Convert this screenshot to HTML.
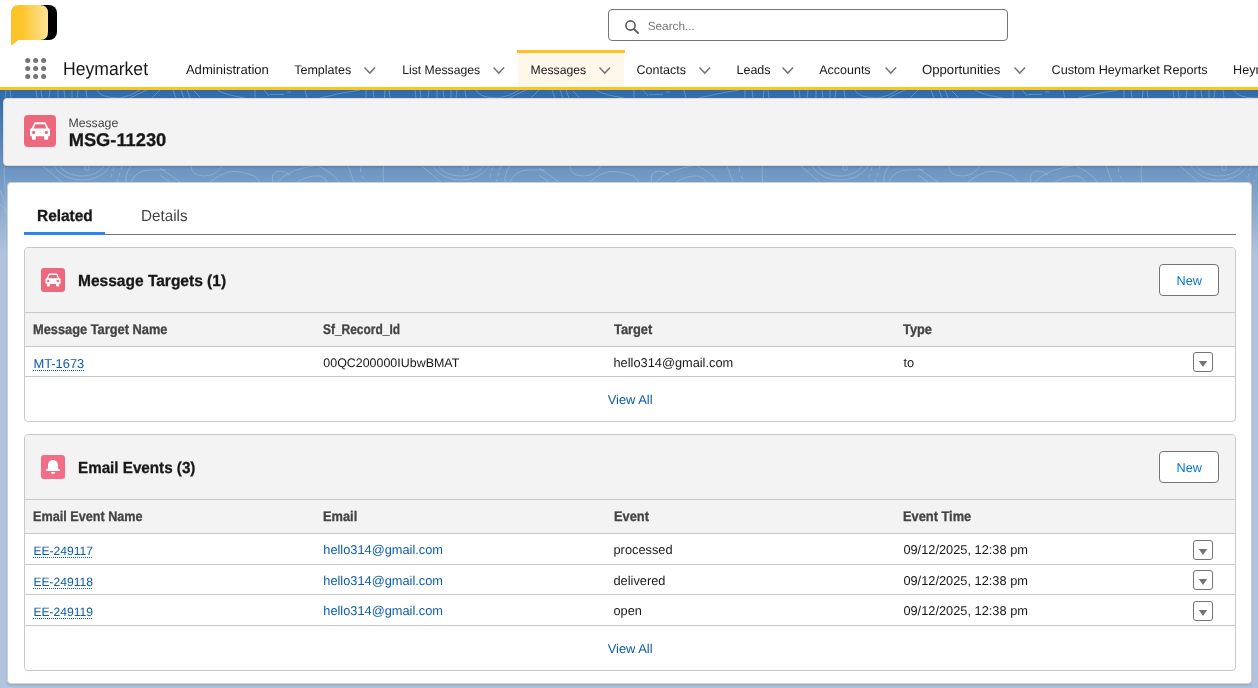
<!DOCTYPE html>
<html><head><meta charset="utf-8"><style>
*{box-sizing:border-box;margin:0;padding:0}
html,body{width:1258px;height:688px;overflow:hidden;background:#b0c4df;font-family:"Liberation Sans",sans-serif;color:#181818;position:relative}
.abs{position:absolute;white-space:nowrap;line-height:20px;text-rendering:geometricPrecision}
.box{position:absolute}
</style></head><body>
<div style="position:absolute;left:0;top:0;width:1258px;height:688px;will-change:transform">
<div class="box" style="left:0;top:0;width:1258px;height:87px;background:#fff"></div>
<svg class="abs" style="left:0;top:0" width="70" height="50" viewBox="0 0 70 50">
<defs><linearGradient id="lg" x1="11" x2="48" y1="0" y2="0" gradientUnits="userSpaceOnUse"><stop offset="0" stop-color="#fdc22a"/><stop offset="0.3" stop-color="#fec52c"/><stop offset="1" stop-color="#fde49a"/></linearGradient></defs>
<rect x="29" y="5" width="28" height="35" rx="8" fill="#000"/>
<path d="M19 5 H40 Q48 5 48 13 V32 Q48 40 40 40 H18.5 L12 45 Q11 45.5 11 44 V13 Q11 5 19 5Z" fill="url(#lg)"/>
</svg>
<div class="box" style="left:608px;top:9px;width:400px;height:32px;border:1px solid #747474;border-radius:4px;background:#fff"></div>
<svg class="abs" style="left:620px;top:16px" width="24" height="24" viewBox="0 0 24 24"><circle cx="10.5" cy="9.5" r="4.6" fill="none" stroke="#5c5c5c" stroke-width="1.6"/><path d="M14 13 L18 17" stroke="#5c5c5c" stroke-width="1.8" stroke-linecap="round"/></svg>
<div class="abs" style="left:647.70px;top:16px;font-size:11.8px;color:#747474">Search...</div>
<svg class="abs" style="left:20px;top:53px" width="32" height="32" viewBox="0 0 32 32" fill="#747474"><circle cx="7.7" cy="7.4" r="2.5"/><circle cx="15.6" cy="7.4" r="2.5"/><circle cx="23.6" cy="7.4" r="2.5"/><circle cx="7.7" cy="15.4" r="2.5"/><circle cx="15.6" cy="15.4" r="2.5"/><circle cx="23.6" cy="15.4" r="2.5"/><circle cx="7.7" cy="23.5" r="2.5"/><circle cx="15.6" cy="23.5" r="2.5"/><circle cx="23.6" cy="23.5" r="2.5"/></svg>
<div class="abs" style="left:62.80px;top:59px;font-size:18.6px;transform:scaleX(0.946);transform-origin:0 0;color:#181818">Heymarket</div>
<div class="box" style="left:518px;top:53px;width:106px;height:34px;background:#fef8ea"></div>
<div class="box" style="left:517px;top:50px;width:108px;height:3px;background:#fec31e"></div>
<div class="abs" style="left:185.90px;top:60px;font-size:13.1px;color:#181818">Administration</div>
<div class="abs" style="left:294.20px;top:60px;font-size:12.5px;color:#181818">Templates</div>
<svg class="abs" style="left:363.40px;top:66.40px" width="13.6" height="8.7" viewBox="-1 -1 13.6 8.7"><path d="M0.5 0.6 L5.80 6.10 L11.10 0.6" fill="none" stroke="#747474" stroke-width="1.45"/></svg>
<div class="abs" style="left:402.20px;top:60px;font-size:12.2px;color:#181818">List Messages</div>
<svg class="abs" style="left:492.30px;top:66.40px" width="13.6" height="8.7" viewBox="-1 -1 13.6 8.7"><path d="M0.5 0.6 L5.80 6.10 L11.10 0.6" fill="none" stroke="#747474" stroke-width="1.45"/></svg>
<div class="abs" style="left:530.60px;top:60px;font-size:12.2px;color:#181818">Messages</div>
<svg class="abs" style="left:598.40px;top:66.40px" width="13.6" height="8.7" viewBox="-1 -1 13.6 8.7"><path d="M0.5 0.6 L5.80 6.10 L11.10 0.6" fill="none" stroke="#747474" stroke-width="1.45"/></svg>
<div class="abs" style="left:636.50px;top:60px;font-size:12.55px;color:#181818">Contacts</div>
<svg class="abs" style="left:698.40px;top:66.40px" width="13.6" height="8.7" viewBox="-1 -1 13.6 8.7"><path d="M0.5 0.6 L5.80 6.10 L11.10 0.6" fill="none" stroke="#747474" stroke-width="1.45"/></svg>
<div class="abs" style="left:736.50px;top:60px;font-size:12.5px;color:#181818">Leads</div>
<svg class="abs" style="left:781.00px;top:66.40px" width="13.6" height="8.7" viewBox="-1 -1 13.6 8.7"><path d="M0.5 0.6 L5.80 6.10 L11.10 0.6" fill="none" stroke="#747474" stroke-width="1.45"/></svg>
<div class="abs" style="left:819.20px;top:60px;font-size:12.5px;color:#181818">Accounts</div>
<svg class="abs" style="left:884.30px;top:66.40px" width="13.6" height="8.7" viewBox="-1 -1 13.6 8.7"><path d="M0.5 0.6 L5.80 6.10 L11.10 0.6" fill="none" stroke="#747474" stroke-width="1.45"/></svg>
<div class="abs" style="left:921.90px;top:60px;font-size:13.2px;color:#181818">Opportunities</div>
<svg class="abs" style="left:1013.30px;top:66.40px" width="13.6" height="8.7" viewBox="-1 -1 13.6 8.7"><path d="M0.5 0.6 L5.80 6.10 L11.10 0.6" fill="none" stroke="#747474" stroke-width="1.45"/></svg>
<div class="abs" style="left:1051.60px;top:60px;font-size:12.65px;color:#181818">Custom Heymarket Reports</div>
<div class="abs" style="left:1233.10px;top:60px;font-size:12.65px;color:#181818">Heymarket Reports</div>
<div class="box" style="left:0;top:87px;width:1258px;height:3px;background:#fec31e"></div>
<div class="box" style="left:0;top:90px;width:1258px;height:165px;background:linear-gradient(to bottom,#2f6aa7 0,rgba(47,106,167,0.55) 45%,rgba(176,196,223,0) 100%)"></div>
<svg class="abs" style="left:0;top:90px" width="1258" height="170" viewBox="0 0 1258 170">
<defs>
<linearGradient id="fade" x1="0" y1="0" x2="0" y2="1"><stop offset="0" stop-color="#fff" stop-opacity="1"/><stop offset="0.6" stop-color="#fff" stop-opacity="0.8"/><stop offset="1" stop-color="#fff" stop-opacity="0"/></linearGradient>
<mask id="fm"><rect width="1258" height="170" fill="url(#fade)"/></mask>
<pattern id="topo" width="379" height="170" patternUnits="userSpaceOnUse" x="0" y="0">
<g fill="none" stroke="#fff" stroke-opacity="0.24" stroke-width="1">
<path d="M6 0 Q2 40 5 70 Q3 84 5 96 Q9 130 2 170"/>
<path d="M38 72 L64 94"/>
<path d="M58 70 A24 16 0 0 0 106 70"/>
<path d="M52 68 A30 22 0 0 0 112 68"/>
<ellipse cx="87" cy="78" rx="2.2" ry="2.5"/>
<path d="M114 77 L110 90 M122 76 L117 92" stroke-dasharray="4 3"/>
<path d="M131 76 Q125 84 126 92"/>
<path d="M131 92 Q136 80 150 80 Q158 80 166 80"/>
<path d="M160 78 L180 92 M160 85 L170 92"/>
<path d="M191 76 Q191 86 205 86 Q215 86 222 76"/>
<path d="M210 92 Q220 84 228 82 Q240 80 254 86 Q258 89 260 92"/>
<path d="M273 92 Q270 82 280 81 Q286 81 290 85"/>
<path d="M277 92 Q290 78 320 75"/>
<path d="M318 76 Q332 82 339 92"/>
<path d="M297 92 Q309 85 320 86 Q326 88 327 92"/>
<path d="M348 76 L354 92"/>
<path d="M360 77 L361 82 M362 86 L364 89"/>
<path d="M10 0 L11 8 M36 0 L37 8 M41 0 L42 8 M50 0 L49 8 M58 0 L58 8 M64 0 L65 8 M72 0 L72 8 M78 0 L77 8 M86 0 L87 8"/>
<path d="M97 0 Q100 8 120 8 Q132 6 140 0"/>
<path d="M130 8 Q138 4 147 0 M152 8 L160 0"/>
<path d="M173 0 L176 8 M181 0 L184 8 M187 0 L190 8"/>
<path d="M194 1 L200 7 M217 0 Q225 5 245 8 M255 0 L255 8 M264 0 L269 6"/>
<path d="M270 4.5 L284 4.5 M287 2 L291 2"/>
<path d="M305 0 L307 8 M320 8 Q340 3 360 0 M366 0 L366 8 M373 0 L374 8"/>
<path d="M0 115 Q10 120 8 135 M0 100 Q6 110 4 125"/>
</g>
</pattern>
</defs>
<rect width="1258" height="170" fill="url(#topo)" mask="url(#fm)"/>
</svg>
<div class="box" style="left:3px;top:98px;width:1270px;height:68px;background:#f3f3f3;border:1px solid #dcdcdc;border-radius:4px;box-shadow:0 2px 2px rgba(0,0,0,.1)"></div>
<svg class="abs" style="left:24px;top:115px" width="32" height="32" viewBox="0 0 32 32"><rect width="32" height="32" rx="4" fill="#eb687f"/>
<path fill="#fff" d="M11.6 7.2 H20.4 Q21.6 7.2 22 8.3 L24.3 13.5 H25 Q26 13.5 26 14.8 V20.2 Q26 21.2 25 21.2 H24.2 V23.8 Q24.2 24.7 23.3 24.7 H21 Q20.2 24.7 20.2 23.8 V21.2 H11.8 V23.8 Q11.8 24.7 11 24.7 H8.8 Q7.9 24.7 7.9 23.8 V21.2 H7 Q6 21.2 6 20.2 V14.8 Q6 13.5 7 13.5 H7.7 L10 8.3 Q10.4 7.2 11.6 7.2Z"/>
<path fill="#eb687f" d="M11.3 9.3 H20.7 L22.4 13.5 H9.6Z"/>
<circle cx="9.6" cy="17.4" r="1.6" fill="#eb687f"/><circle cx="22.4" cy="17.4" r="1.6" fill="#eb687f"/></svg>
<div class="abs" style="left:68.40px;top:113px;font-size:12.3px;color:#444">Message</div>
<div class="abs" style="left:68.70px;top:130px;font-size:18.3px;font-weight:bold;-webkit-text-stroke:0.3px currentColor;color:#181818">MSG-11230</div>
<div class="box" style="left:7px;top:182px;width:1245px;height:502px;background:#fff;border:1px solid #cfcfcf;border-radius:4px;box-shadow:0 2px 2px rgba(0,0,0,.1)"></div>
<div class="abs" style="left:36.70px;top:207px;font-size:16px;font-weight:bold;-webkit-text-stroke:0.3px currentColor;transform:scaleX(0.965);transform-origin:0 0;color:#181818">Related</div>
<div class="abs" style="left:141.20px;top:207px;font-size:16px;transform:scaleX(0.953);transform-origin:0 0;color:#444">Details</div>
<div class="box" style="left:24px;top:234px;width:1212px;height:1px;background:#747474"></div>
<div class="box" style="left:24px;top:232px;width:81px;height:3px;background:#2a87ef"></div>
<div class="box" style="left:24px;top:247px;width:1212px;height:175px;border:1px solid #c9c9c9;border-radius:4px;background:#fff;overflow:hidden"><div class="box" style="left:0;top:0;width:1210px;height:65px;background:#f3f3f3;border-bottom:1px solid #c9c9c9"></div><div class="box" style="left:0;top:65px;width:1210px;height:34px;background:#f3f3f3;border-bottom:1px solid #c9c9c9"></div></div>
<svg class="abs" style="left:41px;top:268px" width="24" height="24" viewBox="0 0 32 32"><rect width="32" height="32" rx="4" fill="#eb687f"/>
<path fill="#fff" d="M11.6 7.2 H20.4 Q21.6 7.2 22 8.3 L24.3 13.5 H25 Q26 13.5 26 14.8 V20.2 Q26 21.2 25 21.2 H24.2 V23.8 Q24.2 24.7 23.3 24.7 H21 Q20.2 24.7 20.2 23.8 V21.2 H11.8 V23.8 Q11.8 24.7 11 24.7 H8.8 Q7.9 24.7 7.9 23.8 V21.2 H7 Q6 21.2 6 20.2 V14.8 Q6 13.5 7 13.5 H7.7 L10 8.3 Q10.4 7.2 11.6 7.2Z"/>
<path fill="#eb687f" d="M11.3 9.3 H20.7 L22.4 13.5 H9.6Z"/>
<circle cx="9.6" cy="17.4" r="1.6" fill="#eb687f"/><circle cx="22.4" cy="17.4" r="1.6" fill="#eb687f"/></svg>
<div class="abs" style="left:77.70px;top:272px;font-size:16px;font-weight:bold;-webkit-text-stroke:0.3px currentColor;transform:scaleX(0.97);transform-origin:0 0;color:#181818">Message Targets (1)</div>
<div class="box" style="left:1159px;top:264px;width:60px;height:32px;border:1px solid #747474;border-radius:4px;background:#fff"></div>
<div class="abs" style="left:1176.60px;top:271px;font-size:12.7px;color:#0176d3">New</div>
<div class="abs" style="left:33.40px;top:319px;font-size:14px;font-weight:bold;-webkit-text-stroke:0.3px currentColor;transform:scaleX(0.916);transform-origin:0 0;color:#444">Message Target Name</div>
<div class="abs" style="left:323.30px;top:319px;font-size:14px;font-weight:bold;-webkit-text-stroke:0.3px currentColor;transform:scaleX(0.8531722525331255);transform-origin:0 0;color:#444">Sf_Record_Id</div>
<div class="abs" style="left:613.50px;top:319px;font-size:14px;font-weight:bold;-webkit-text-stroke:0.3px currentColor;transform:scaleX(0.916);transform-origin:0 0;color:#444">Target</div>
<div class="abs" style="left:903.40px;top:319px;font-size:14px;font-weight:bold;-webkit-text-stroke:0.3px currentColor;transform:scaleX(0.916);transform-origin:0 0;color:#444">Type</div>
<div class="box" style="left:24px;top:376px;width:1212px;height:1px;background:#c9c9c9"></div>
<div class="abs" style="left:33.40px;top:354px;font-size:12.9px;color:#0b5cab">MT-1673</div>
<div class="box" style="left:32.9px;top:370px;width:51px;height:1px;border-top:1px dotted #0b5cab"></div>
<div class="abs" style="left:323.30px;top:353px;font-size:12.45px;color:#181818">00QC200000IUbwBMAT</div>
<div class="abs" style="left:613.50px;top:353px;font-size:12.8px;color:#181818">hello314@gmail.com</div>
<div class="abs" style="left:903.40px;top:353px;font-size:12.8px;color:#181818">to</div>
<div class="box" style="left:1193px;top:352px;width:20px;height:20px;border:1px solid #747474;border-radius:3px;background:#fff"></div>
<svg class="abs" style="left:1198px;top:361px" width="10" height="8" viewBox="0 0 10 8"><path d="M0.8 0 H9.2 L5 6Z" fill="#747474"/></svg>
<div class="abs" style="left:607.70px;top:390px;font-size:12.9px;color:#0b5cab">View All</div>
<div class="box" style="left:24px;top:434px;width:1212px;height:237px;border:1px solid #c9c9c9;border-radius:4px;background:#fff;overflow:hidden"><div class="box" style="left:0;top:0;width:1210px;height:65px;background:#f3f3f3;border-bottom:1px solid #c9c9c9"></div><div class="box" style="left:0;top:65px;width:1210px;height:34px;background:#f3f3f3;border-bottom:1px solid #c9c9c9"></div></div>
<svg class="abs" style="left:41px;top:455px" width="24" height="24" viewBox="0 0 24 24"><rect width="24" height="24" rx="3" fill="#f26d85"/>
<path fill="#fff" d="M12 5 C9 5 7 7.3 7 10.3 V13.4 L5.4 14.3 Q5 14.6 5 15.2 V15.5 Q5 16 5.6 16 H18.4 Q19 16 19 15.5 V15.2 Q19 14.6 18.6 14.3 L17 13.4 V10.3 C17 7.3 15 5 12 5Z"/>
<path fill="#fff" d="M10 17 H14 Q14 19 12 19 Q10 19 10 17Z"/></svg>
<div class="abs" style="left:77.70px;top:459px;font-size:16px;font-weight:bold;-webkit-text-stroke:0.3px currentColor;transform:scaleX(0.95);transform-origin:0 0;color:#181818">Email Events (3)</div>
<div class="box" style="left:1159px;top:451px;width:60px;height:32px;border:1px solid #747474;border-radius:4px;background:#fff"></div>
<div class="abs" style="left:1176.60px;top:458px;font-size:12.7px;color:#0176d3">New</div>
<div class="abs" style="left:33.40px;top:506px;font-size:14px;font-weight:bold;-webkit-text-stroke:0.3px currentColor;transform:scaleX(0.9031488698363211);transform-origin:0 0;color:#444">Email Event Name</div>
<div class="abs" style="left:323.30px;top:506px;font-size:14px;font-weight:bold;-webkit-text-stroke:0.3px currentColor;transform:scaleX(0.916);transform-origin:0 0;color:#444">Email</div>
<div class="abs" style="left:613.50px;top:506px;font-size:14px;font-weight:bold;-webkit-text-stroke:0.3px currentColor;transform:scaleX(0.916);transform-origin:0 0;color:#444">Event</div>
<div class="abs" style="left:903.40px;top:506px;font-size:14px;font-weight:bold;-webkit-text-stroke:0.3px currentColor;transform:scaleX(0.916);transform-origin:0 0;color:#444">Event Time</div>
<div class="box" style="left:24px;top:564px;width:1212px;height:1px;background:#c9c9c9"></div>
<div class="abs" style="left:33.40px;top:541px;font-size:12.1px;color:#0b5cab">EE-249117</div>
<div class="box" style="left:32.9px;top:557px;width:59px;height:1px;border-top:1px dotted #0b5cab"></div>
<div class="abs" style="left:323.30px;top:540px;font-size:12.8px;color:#0b5cab">hello314@gmail.com</div>
<div class="abs" style="left:613.50px;top:540px;font-size:12.8px;color:#181818">processed</div>
<div class="abs" style="left:903.40px;top:540px;font-size:12.8px;color:#181818">09/12/2025, 12:38 pm</div>
<div class="box" style="left:1193px;top:540px;width:20px;height:20px;border:1px solid #747474;border-radius:3px;background:#fff"></div>
<svg class="abs" style="left:1198px;top:549px" width="10" height="8" viewBox="0 0 10 8"><path d="M0.8 0 H9.2 L5 6Z" fill="#747474"/></svg>
<div class="box" style="left:24px;top:594px;width:1212px;height:1px;background:#c9c9c9"></div>
<div class="abs" style="left:33.40px;top:572px;font-size:12.1px;color:#0b5cab">EE-249118</div>
<div class="box" style="left:32.9px;top:588px;width:59px;height:1px;border-top:1px dotted #0b5cab"></div>
<div class="abs" style="left:323.30px;top:571px;font-size:12.8px;color:#0b5cab">hello314@gmail.com</div>
<div class="abs" style="left:613.50px;top:571px;font-size:12.8px;color:#181818">delivered</div>
<div class="abs" style="left:903.40px;top:571px;font-size:12.8px;color:#181818">09/12/2025, 12:38 pm</div>
<div class="box" style="left:1193px;top:570px;width:20px;height:20px;border:1px solid #747474;border-radius:3px;background:#fff"></div>
<svg class="abs" style="left:1198px;top:579px" width="10" height="8" viewBox="0 0 10 8"><path d="M0.8 0 H9.2 L5 6Z" fill="#747474"/></svg>
<div class="box" style="left:24px;top:625px;width:1212px;height:1px;background:#c9c9c9"></div>
<div class="abs" style="left:33.40px;top:602px;font-size:12.1px;color:#0b5cab">EE-249119</div>
<div class="box" style="left:32.9px;top:618px;width:59px;height:1px;border-top:1px dotted #0b5cab"></div>
<div class="abs" style="left:323.30px;top:601px;font-size:12.8px;color:#0b5cab">hello314@gmail.com</div>
<div class="abs" style="left:613.50px;top:601px;font-size:12.8px;color:#181818">open</div>
<div class="abs" style="left:903.40px;top:601px;font-size:12.8px;color:#181818">09/12/2025, 12:38 pm</div>
<div class="box" style="left:1193px;top:601px;width:20px;height:20px;border:1px solid #747474;border-radius:3px;background:#fff"></div>
<svg class="abs" style="left:1198px;top:610px" width="10" height="8" viewBox="0 0 10 8"><path d="M0.8 0 H9.2 L5 6Z" fill="#747474"/></svg>
<div class="abs" style="left:607.70px;top:639px;font-size:12.9px;color:#0b5cab">View All</div>
</div></body></html>
